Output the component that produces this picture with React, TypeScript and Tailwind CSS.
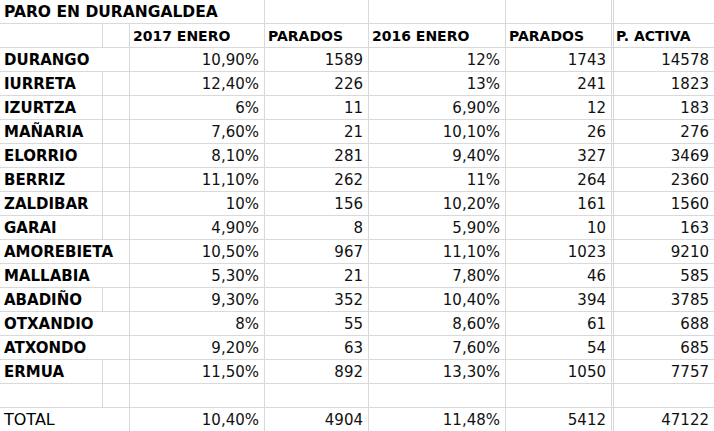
import React from 'react';

type Row = {
  name: string;
  wide: boolean;
  p17: string;
  par17: string;
  p16: string;
  par16: string;
  activa: string;
};

const rows: Row[] = [
  { name: 'DURANGO', wide: true, p17: '10,90%', par17: '1589', p16: '12%', par16: '1743', activa: '14578' },
  { name: 'IURRETA', wide: false, p17: '12,40%', par17: '226', p16: '13%', par16: '241', activa: '1823' },
  { name: 'IZURTZA', wide: false, p17: '6%', par17: '11', p16: '6,90%', par16: '12', activa: '183' },
  { name: 'MAÑARIA', wide: false, p17: '7,60%', par17: '21', p16: '10,10%', par16: '26', activa: '276' },
  { name: 'ELORRIO', wide: false, p17: '8,10%', par17: '281', p16: '9,40%', par16: '327', activa: '3469' },
  { name: 'BERRIZ', wide: false, p17: '11,10%', par17: '262', p16: '11%', par16: '264', activa: '2360' },
  { name: 'ZALDIBAR', wide: false, p17: '10%', par17: '156', p16: '10,20%', par16: '161', activa: '1560' },
  { name: 'GARAI', wide: false, p17: '4,90%', par17: '8', p16: '5,90%', par16: '10', activa: '163' },
  { name: 'AMOREBIETA', wide: true, p17: '10,50%', par17: '967', p16: '11,10%', par16: '1023', activa: '9210' },
  { name: 'MALLABIA', wide: true, p17: '5,30%', par17: '21', p16: '7,80%', par16: '46', activa: '585' },
  { name: 'ABADIÑO', wide: false, p17: '9,30%', par17: '352', p16: '10,40%', par16: '394', activa: '3785' },
  { name: 'OTXANDIO', wide: true, p17: '8%', par17: '55', p16: '8,60%', par16: '61', activa: '688' },
  { name: 'ATXONDO', wide: true, p17: '9,20%', par17: '63', p16: '7,60%', par16: '54', activa: '685' },
  { name: 'ERMUA', wide: false, p17: '11,50%', par17: '892', p16: '13,30%', par16: '1050', activa: '7757' },
];

const cell = 'h-6 flex items-end pb-[3px] border-b border-r border-[#d9d9d9] whitespace-nowrap overflow-visible leading-4';
const bold = 'font-bold text-[15px]';
const num = `${cell} justify-end pr-[5px] text-[15px] text-[#111]`;
const lastF = 'border-r-[3px] border-double';

function DataRow({ r }: { r: Row }) {
  return (
    <>
      {r.wide ? (
        <div className={`${cell} col-span-2 pl-1 ${bold}`}>{r.name}</div>
      ) : (
        <>
          <div className={`${cell} pl-1 ${bold}`}>{r.name}</div>
          <div className={cell}></div>
        </>
      )}
      <div className={num}>{r.p17}</div>
      <div className={num}>{r.par17}</div>
      <div className={num}>{r.p16}</div>
      <div className={`${num} ${lastF}`}>{r.par16}</div>
      <div className={num}>{r.activa}</div>
    </>
  );
}

export default function App() {
  return (
    <div className="w-[714px] h-[431px] overflow-hidden bg-white text-black">
      <div
        className="grid grid-cols-[103px_27px_135px_104px_137px_108px_101px]"
        style={{ fontFamily: '"DejaVu Sans", "Liberation Sans", sans-serif' }}
      >
        {/* title */}
        <div className={`${cell} col-span-3 pl-1 font-bold text-[15.5px]`}>PARO EN DURANGALDEA</div>
        <div className={cell}></div>
        <div className={cell}></div>
        <div className={`${cell} ${lastF}`}></div>
        <div className={cell}></div>

        {/* header */}
        <div className={cell}></div>
        <div className={cell}></div>
        <div className={`${cell} pl-[3px] font-bold text-[14px]`}>2017 ENERO</div>
        <div className={`${cell} pl-[3px] font-bold text-[14px]`}>PARADOS</div>
        <div className={`${cell} pl-[3px] font-bold text-[14px]`}>2016 ENERO</div>
        <div className={`${cell} pl-[3px] font-bold text-[14px] ${lastF}`}>PARADOS</div>
        <div className={`${cell} pl-[2px] font-bold text-[14px]`}>P. ACTIVA</div>

        {rows.map((r) => (
          <DataRow key={r.name} r={r} />
        ))}

        {/* blank */}
        <div className={cell}></div>
        <div className={cell}></div>
        <div className={cell}></div>
        <div className={cell}></div>
        <div className={cell}></div>
        <div className={`${cell} ${lastF}`}></div>
        <div className={cell}></div>

        {/* total */}
        <div className={`${cell} col-span-2 pl-1 text-[16px]`}>TOTAL</div>
        <div className={num}>10,40%</div>
        <div className={num}>4904</div>
        <div className={num}>11,48%</div>
        <div className={`${num} ${lastF}`}>5412</div>
        <div className={num}>47122</div>
      </div>
    </div>
  );
}
